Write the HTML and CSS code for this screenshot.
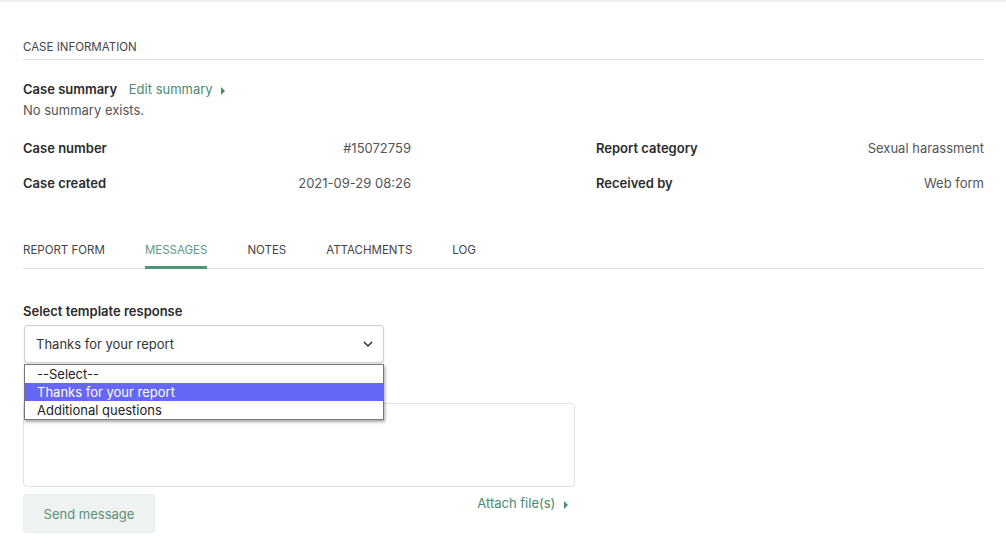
FILE: index.html
```html
<!DOCTYPE html>
<html lang="en">
<head>
	<meta charset="UTF-8">
	<title>Case</title>
	<link rel="stylesheet" href="styles.css">
</head>
<body>

<div class="topbar"></div>

<div class="page">
	<h2 class="section-title">Case information</h2>

	<div class="summary">
		<p class="summary-head">
			<span class="label">Case summary</span>
			<a class="link" href="#">Edit summary <span class="caret"></span></a>
		</p>
		<p class="summary-text">No summary exists.</p>
	</div>

	<div class="details">
		<div class="detail-row"><span class="label">Case number</span><span class="value">#15072759</span></div>
		<div class="detail-row"><span class="label">Report category</span><span class="value">Sexual harassment</span></div>
		<div class="detail-row"><span class="label">Case created</span><span class="value">2021-09-29 08:26</span></div>
		<div class="detail-row"><span class="label">Received by</span><span class="value">Web form</span></div>
	</div>

	<ul class="tabs">
		<li>Report form</li>
		<li class="active">Messages</li>
		<li>Notes</li>
		<li>Attachments</li>
		<li>Log</li>
	</ul>

	<div class="message-form">
		<p class="field-label">Select template response</p>
		<div class="select-wrap">
			<div class="select">
				<span>Thanks for your report</span>
				<svg class="chevron" width="10" height="6" viewBox="0 0 10 6"><path d="M1 1 L5 5 L9 1" fill="none" stroke="#333" stroke-width="1.5"/></svg>
			</div>
			<ul class="select-options">
				<li>--Select--</li>
				<li class="selected">Thanks for your report</li>
				<li>Additional questions</li>
			</ul>
		</div>

		<div class="textarea"></div>

		<div class="form-actions">
			<button class="send">Send message</button>
			<a class="link attach" href="#">Attach file(s) <span class="caret"></span></a>
		</div>
	</div>
</div>

</body>
</html>
```

FILE: styles.css
```css
body {
	margin: 0;
	padding: 0;
	background: #fff;
	color: #333;
	font-family: Inter, "Noto Sans", sans-serif;
	font-size: 13px;
}

p {
	margin: 0;
}

.topbar {
	height: 2px;
	background: #f0f0f0;
}

.page {
	padding: 37px 22px 0 23px;
}

.section-title {
	margin: 0;
	font-size: 11.5px;
	font-weight: 400;
	line-height: 16px;
	text-transform: uppercase;
	color: #444;
	padding-bottom: 4px;
	border-bottom: 1px solid #ddd;
}

.label {
	font-weight: 600;
	color: #2b2b2b;
}

.link {
	color: #4c8a6f;
	text-decoration: none;
}

.caret {
	display: inline-block;
	width: 0;
	height: 0;
	margin-left: 5px;
	border-left: 4px solid #4c8a6f;
	border-top: 4px solid transparent;
	border-bottom: 4px solid transparent;
	vertical-align: -1px;
}

.summary {
	margin-top: 19px;
}

.summary-head {
	line-height: 20px;
}

.summary-head .link {
	margin-left: 8px;
}

.summary-text {
	line-height: 22px;
	color: #555;
}

.details {
	display: grid;
	grid-template-columns: 388px 388px;
	justify-content: space-between;
	margin-top: 10px;
}

.detail-row {
	display: flex;
	justify-content: space-between;
	line-height: 35px;
}

.detail-row .value {
	color: #555;
}

.tabs {
	list-style: none;
	margin: 39px 0 0 0;
	padding: 0;
	display: flex;
	gap: 40px;
	border-bottom: 1px solid #ddd;
}

.tabs li {
	font-size: 11.5px;
	text-transform: uppercase;
	color: #444;
	line-height: 16px;
	padding: 2px 0 10px 0;
}

.tabs li.active {
	color: #5a9a80;
	border-bottom: 3px solid #4f9579;
	padding-bottom: 7px;
	margin-bottom: -1px;
}

.message-form {
	margin-top: 32px;
}

.field-label {
	font-weight: 600;
	color: #2b2b2b;
	line-height: 20px;
}

.select-wrap {
	position: relative;
	width: 360px;
	margin-top: 4px;
	margin-left: 1px;
}

.select {
	height: 36px;
	border: 1px solid #cfcfcf;
	border-radius: 3px;
	box-shadow: 0 1px 2px rgba(0,0,0,0.12);
	display: flex;
	align-items: center;
	justify-content: space-between;
	padding: 0 10px 0 11px;
	color: #333;
}

.select-options {
	position: absolute;
	left: 0;
	right: 0;
	top: 39px;
	list-style: none;
	margin: 0;
	padding: 0;
	background: #fff;
	border: 1px solid #777;
	box-shadow: 1px 2px 3px rgba(0,0,0,0.35);
	z-index: 2;
}

.select-options li {
	line-height: 18px;
	padding: 0 12px;
	color: #222;
}

.select-options li.selected {
	background: #6767f7;
	color: #fff;
}

.textarea {
	width: 550px;
	height: 82px;
	margin-top: 40px;
	border: 1px solid #e2e2e2;
	border-radius: 4px;
}

.form-actions {
	display: flex;
	justify-content: space-between;
	width: 545px;
	margin-top: 7px;
}

.send {
	width: 132px;
	height: 39px;
	border: 1px solid #e8eeeb;
	border-radius: 3px;
	background: #eef2f0;
	color: #5c8f79;
	font-family: inherit;
	font-size: 13px;
}

.attach {
	line-height: 18px;
}
```
